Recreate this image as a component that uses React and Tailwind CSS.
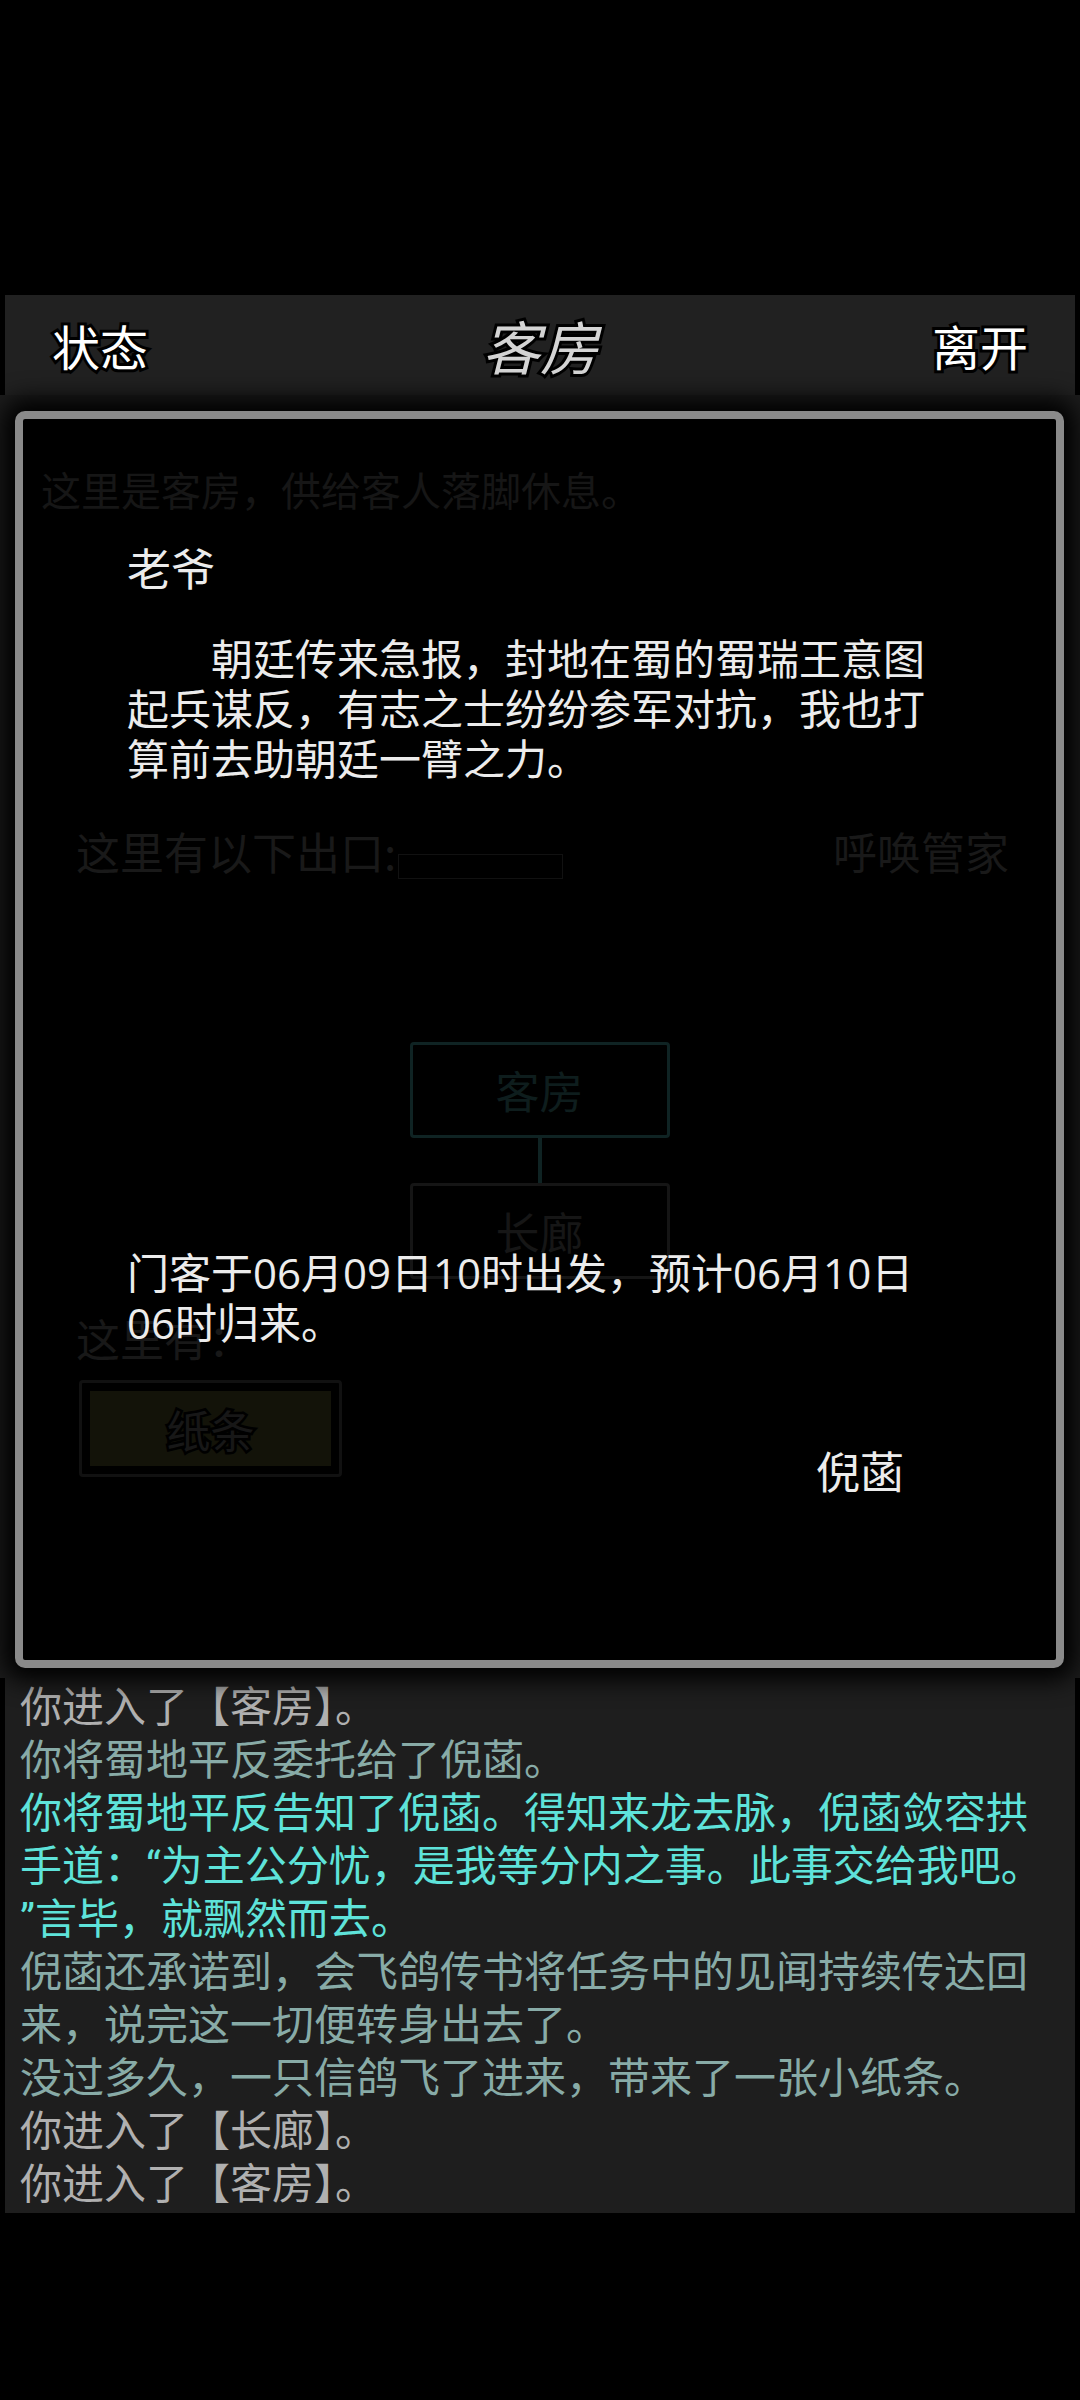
import React from 'react';

const logLines = [
  { text: '你进入了【客房】。', color: 'text-[#b0b0b0]' },
  { text: '你将蜀地平反委托给了倪菡。', color: 'text-[#88aba7]' },
  {
    text: '你将蜀地平反告知了倪菡。得知来龙去脉，倪菡敛容拱手道：“为主公分忧，是我等分内之事。此事交给我吧。”言毕，就飘然而去。',
    color: 'text-[#5ee3da]',
  },
  { text: '倪菡还承诺到，会飞鸽传书将任务中的见闻持续传达回来，说完这一切便转身出去了。', color: 'text-[#88aba7]' },
  { text: '没过多久，一只信鸽飞了进来，带来了一张小纸条。', color: 'text-[#88aba7]' },
  { text: '你进入了【长廊】。', color: 'text-[#b0b0b0]' },
  { text: '你进入了【客房】。', color: 'text-[#b0b0b0]' },
];

const RoomBox = ({ name, tone }) => (
  <div
    className={`w-[260px] h-[96px] rounded-[4px] border-[3px] flex items-center justify-center text-[44px] ${tone}`}
  >
    {name}
  </div>
);

const App = () => {
  return (
    <div className="min-h-[2400px] bg-black font-['Noto_Sans_CJK_SC',sans-serif] flex flex-col">
      <div className="h-[295px]" />

      {/* top bar */}
      <header className="mx-[5px] h-[100px] bg-[#212121] flex items-center justify-between pl-[47px] pr-[47px]">
        <button className="text-[48px] leading-none text-white [-webkit-text-stroke:6px_#000] [paint-order:stroke_fill]">
          状态
        </button>
        <h1 className="text-[58px] leading-none italic text-[#d4d4d4] [-webkit-text-stroke:6px_#000] [paint-order:stroke_fill]">
          客房
        </h1>
        <button className="text-[48px] leading-none text-white [-webkit-text-stroke:6px_#000] [paint-order:stroke_fill]">
          离开
        </button>
      </header>

      {/* scene */}
      <main className="bg-[#1d1d1d] pt-[16px] pb-[10px] px-[15px] pr-[16px]">
        <div className="relative h-[1257px] rounded-[10px] border-[8px] border-[#8a8a8a] bg-black shadow-[0_0_24px_12px_#000] overflow-hidden">
          {/* room underneath, dimmed */}
          <div className="flex flex-col text-[#161616]">
            <p className="pt-[40px] pl-[18px] text-[40px] leading-[60px]">这里是客房，供给客人落脚休息。</p>

            <div className="mt-[302px] pl-[53px] pr-[47px] flex items-center justify-between text-[44px] leading-[60px] text-[#191919]">
              <div className="flex items-center">
                <span>这里有以下出口:</span>
                <span className="ml-[2px] w-[165px] h-[25px] mt-[30px] border border-[#111]" />
              </div>
              <span>呼唤管家</span>
            </div>

            <div className="mt-[161px] flex flex-col items-center">
              <RoomBox name="客房" tone="border-[#0f2323] text-[#0e1d1d]" />
              <div className="w-[4px] h-[45px] bg-[#0f2323]" />
              <RoomBox name="长廊" tone="border-[#151515] text-[#161616]" />
            </div>

            <p className="mt-[29px] pl-[53px] text-[44px] leading-[60px] text-[#181818]">这里有：</p>

            <div className="mt-[12px] ml-[56px] w-[263px] h-[97px] rounded-[4px] border-[3px] border-[#111] p-[8px]">
              <div className="h-full bg-[#131309] flex items-center justify-center text-[44px] text-[#171717] [-webkit-text-stroke:5px_#000] [paint-order:stroke_fill]">
                纸条
              </div>
            </div>
          </div>

          {/* the note */}
          <div className="absolute inset-0 pt-[123px] pl-[104px] flex flex-col text-[#ececec]">
            <p className="text-[44px] leading-[50px]">老爷</p>
            <p className="mt-[40px] w-[800px] text-[42px] leading-[50px] indent-[84px]">
              朝廷传来急报，封地在蜀的蜀瑞王意图起兵谋反，有志之士纷纷参军对抗，我也打算前去助朝廷一臂之力。
            </p>
            <p className="mt-[466px] w-[820px] text-[42px] leading-[50px] font-['Open_Sans','Noto_Sans_CJK_SC',sans-serif]">
              门客于06月09日10时出发，预计06月10日06时归来。
            </p>
            <p className="mt-[97px] ml-[689px] text-[44px] leading-[50px]">倪菡</p>
          </div>
        </div>
      </main>

      {/* message log */}
      <section className="mx-[5px] bg-[#1e1e1e] pl-[15px] pr-[40px] pt-[3px] pb-[2px] text-[42px] leading-[53px] font-['Roboto','Noto_Sans_CJK_SC',sans-serif] [line-break:anywhere]">
        {logLines.map((line, i) => (
          <p key={i} className={line.color}>
            {line.text}
          </p>
        ))}
      </section>
    </div>
  );
};

export default App;
